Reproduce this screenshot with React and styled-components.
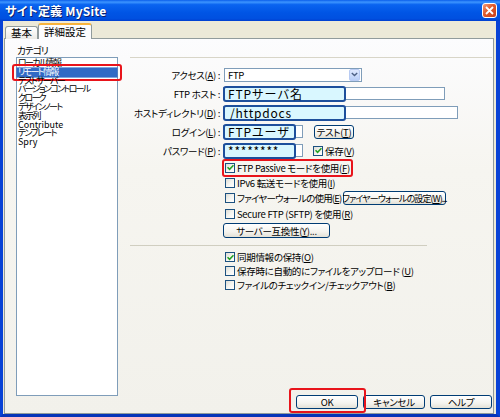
import React from 'react';
import styled, { createGlobalStyle } from 'styled-components';

const GlobalStyle = createGlobalStyle`
  html, body { margin: 0; padding: 0; background: #fff; }
  body {
    font-family: "Noto Sans CJK JP", "Liberation Sans", sans-serif;
    font-feature-settings: "palt" 1;
  }
`;

const Window = styled.div`
  width: 500px;
  height: 417px;
  display: flex;
  flex-direction: column;
  background: #ece9d8;
  overflow: hidden;
  font-size: 9.5px;
  letter-spacing: -0.3px;
  color: #000;
`;

const TitleBar = styled.div`
  height: 21px;
  flex: none;
  box-sizing: border-box;
  display: flex;
  align-items: center;
  justify-content: space-between;
  padding: 0 3px 0 5px;
  background: linear-gradient(to bottom, #0a5eeb 0%, #3d95ff 10%, #0a64f0 22%, #0055e5 60%, #0050e0 88%, #003ed0 100%);
`;

const Title = styled.span`
  color: #fff;
  font-weight: bold;
  font-size: 12px;
  letter-spacing: 0.2px;
  text-shadow: 1px 1px 0 #0a1e6a;
`;

const CloseBtn = styled.div`
  width: 15px;
  height: 15px;
  box-sizing: border-box;
  border: 1px solid #fff;
  border-radius: 3px;
  background: linear-gradient(135deg, #f09a7a 0%, #e05a2c 45%, #c7401a 100%);
  display: flex;
  align-items: center;
  justify-content: center;
`;

const Frame = styled.div`
  flex: 1;
  display: flex;
  flex-direction: column;
  border-left: 3px solid #0842d6;
  border-right: 4px solid #0842d6;
  border-bottom: 3px solid #0734b8;
  padding: 2px 2px 0 1px;
  min-height: 0;
`;

const TabRow = styled.div`
  height: 16px;
  display: flex;
  align-items: flex-end;
  padding-left: 1px;
  margin-bottom: -1px;
  position: relative;
  z-index: 1;
`;

const Tab = styled.div`
  box-sizing: border-box;
  height: ${p => (p.$active ? '16px' : '13px')};
  padding: 0 5px;
  border: 1px solid #919b9c;
  border-bottom: none;
  border-top: ${p => (p.$active ? '2px solid #f8b33c' : '1px solid #919b9c')};
  border-radius: 3px 3px 0 0;
  background: ${p => (p.$active ? '#fcfcfe' : 'linear-gradient(#ffffff, #ecebe6)')};
  font-size: 10.5px;
  letter-spacing: 0;
  line-height: ${p => (p.$active ? '13px' : '12px')};
`;

const Panel = styled.div`
  flex: 1;
  min-height: 0;
  display: flex;
  border: 1px solid #919b9c;
  background: linear-gradient(#fcfcfe 0%, #f6f5f0 35%, #f2f1eb 100%);
`;

const LeftCol = styled.div`
  width: 102px;
  margin-left: 11px;
  padding-top: 6px;
  display: flex;
  flex-direction: column;
`;

const CategoryLabel = styled.div`
  height: 12px;
  line-height: 11px;
  padding-left: 1px;
  letter-spacing: -0.8px;
`;

const ListBox = styled.div`
  box-sizing: border-box;
  height: 339px;
  border: 1px solid #7f9db9;
  background: #fff;
  padding-top: 1px;
`;

const ListItem = styled.div`
  position: relative;
  height: 8.8px;
  line-height: 8.8px;
  padding-left: 1px;
  font-size: 9px;
  letter-spacing: ${p => (p.$latin ? '0' : '-1.7px')};
  white-space: nowrap;
  color: ${p => (p.$selected ? '#fff' : '#000')};
  background: ${p => (p.$selected ? '#316ac5' : 'transparent')};
  box-shadow: ${p => (p.$selected ? '0 0 0 0.6px #316ac5' : 'none')};

  ${p => p.$callout && `
    &::after {
      content: '';
      position: absolute;
      left: -5px;
      right: -5px;
      top: -4px;
      bottom: -4px;
      border: 2px solid #e8141b;
      border-radius: 3px;
    }
  `}
`;

const RightCol = styled.div`
  flex: 1;
  margin: 18px 1px 0 12px;
  border-top: 1px solid #d8d5c8;
  padding-top: 7px;
  display: flex;
  flex-direction: column;
`;

const FormRow = styled.div`
  height: 19px;
  display: flex;
  align-items: center;
`;

const Label = styled.div`
  width: 90px;
  margin-right: 3px;
  text-align: right;
  white-space: nowrap;
`;

const Select = styled.div`
  box-sizing: border-box;
  width: 138px;
  height: 14px;
  margin-left: 1px;
  border: 1px solid #7f9db9;
  background: #fff;
  display: flex;
  align-items: center;
  justify-content: space-between;
  padding: 0 1px 0 3px;
`;

const SelectArrow = styled.div`
  box-sizing: border-box;
  width: 11px;
  height: 12px;
  border-radius: 2px;
  border: 1px solid #b8cbf3;
  background: linear-gradient(#dfe9ff, #b9cff8);
  display: flex;
  align-items: center;
  justify-content: center;
`;

const FieldWrap = styled.div`
  position: relative;
  width: ${p => p.$width}px;
  height: 16px;
  display: flex;
  align-items: center;
`;

const PlainBox = styled.div`
  box-sizing: border-box;
  width: 100%;
  height: 13px;
  border: 1px solid #7f9db9;
  background: #fff;
`;

const HighlightBox = styled.div`
  position: absolute;
  left: 0;
  top: 0;
  box-sizing: border-box;
  width: ${p => p.$width}px;
  height: 16px;
  border: 2px solid #1d4f9c;
  border-radius: 3px;
  background: #d9f7ff;
  padding-left: ${p => p.$pad || 3}px;
  font-size: 12px;
  line-height: 12px;
  letter-spacing: 0.8px;
  white-space: nowrap;
  font-feature-settings: normal;
`;

const Button = styled.div`
  box-sizing: border-box;
  width: ${p => p.$width}px;
  height: ${p => p.$height || 14}px;
  margin-left: ${p => p.$ml || 0}px;
  border: 1px solid #003c74;
  border-radius: 3px;
  background: linear-gradient(#ffffff 0%, #f4f3ee 60%, #e3e1d6 100%);
  display: flex;
  align-items: center;
  justify-content: center;
  white-space: nowrap;
  font-size: ${p => (p.$tight ? '9px' : 'inherit')};
  letter-spacing: ${p => (p.$tight ? '-0.9px' : 'inherit')};
`;

const CheckList = styled.div`
  margin-left: ${p => p.$ml}px;
  display: flex;
  flex-direction: column;
`;

const CheckRow = styled.div`
  height: ${p => p.$h}px;
  margin-left: ${p => p.$ml || 0}px;
  display: flex;
  align-items: center;
  white-space: nowrap;
`;

const CheckText = styled.span`
  width: ${p => (p.$width ? `${p.$width}px` : 'auto')};
  flex: none;
  letter-spacing: ${p => (p.$tight ? '-0.8px' : 'inherit')};
`;

const Box = styled.span`
  box-sizing: border-box;
  width: 10px;
  height: 10px;
  margin-right: 2px;
  flex: none;
  border: 1px solid #1c5180;
  background: linear-gradient(135deg, #dcdcd5 0%, #f4f4f0 50%, #ffffff 100%);
  display: inline-flex;
  align-items: center;
  justify-content: center;
`;

const Callout = styled.span`
  position: relative;
  display: inline-flex;
  align-items: center;

  &::after {
    content: '';
    position: absolute;
    inset: ${p => p.$inset};
    border: 2px solid #e8141b;
    border-radius: 3px;
  }
`;

const Separator = styled.div`
  width: 297px;
  height: 1px;
  margin-top: 7px;
  background: #d0cec0;
`;

const Footer = styled.div`
  margin-top: auto;
  padding-bottom: 4px;
  display: flex;
  justify-content: flex-end;
  gap: 5px;
`;

const Check = ({ checked }) => (
  <Box>
    {checked && (
      <svg width="7" height="7" viewBox="0 0 7 7">
        <path d="M0.5 3.2 L2.6 5.4 L6.5 1.2" stroke="#21a121" strokeWidth="1.6" fill="none" />
      </svg>
    )}
  </Box>
);

const Field = ({ width, hl, pad, children }) => (
  <FieldWrap $width={width}>
    <PlainBox />
    <HighlightBox $width={hl} $pad={pad}>{children}</HighlightBox>
  </FieldWrap>
);

const categories = [
  { name: 'ローカル情報' },
  { name: 'リモート情報', selected: true },
  { name: 'テストサーバー' },
  { name: 'バージョンコントロール' },
  { name: 'クローク' },
  { name: 'デザインノート' },
  { name: '表示列' },
  { name: 'Contribute', latin: true },
  { name: 'テンプレート' },
  { name: 'Spry', latin: true },
];

export default function App() {
  return (
    <>
      <GlobalStyle />
      <Window>
        <TitleBar>
          <Title>サイト定義 MySite</Title>
          <CloseBtn>
            <svg width="9" height="9" viewBox="0 0 9 9">
              <path d="M1 1 L8 8 M8 1 L1 8" stroke="#fff" strokeWidth="1.8" />
            </svg>
          </CloseBtn>
        </TitleBar>
        <Frame>
          <TabRow>
            <Tab>基本</Tab>
            <Tab $active>詳細設定</Tab>
          </TabRow>
          <Panel>
            <LeftCol>
              <CategoryLabel>カテゴリ</CategoryLabel>
              <ListBox>
                {categories.map(c => (
                  <ListItem key={c.name} $selected={c.selected} $callout={c.selected} $latin={c.latin}>{c.name}</ListItem>
                ))}
              </ListBox>
            </LeftCol>
            <RightCol>
              <FormRow>
                <Label>アクセス(<u>A</u>) :</Label>
                <Select>
                  FTP
                  <SelectArrow>
                    <svg width="7" height="5" viewBox="0 0 7 5">
                      <path d="M0.8 1 L3.5 3.6 L6.2 1" stroke="#4d6185" strokeWidth="1.4" fill="none" />
                    </svg>
                  </SelectArrow>
                </Select>
              </FormRow>
              <FormRow>
                <Label>FTP ホスト :</Label>
                <Field width={222} hl={123}>FTPサーバ名</Field>
              </FormRow>
              <FormRow>
                <Label>ホストディレクトリ(<u>D</u>) :</Label>
                <Field width={235} hl={123} pad={5}>/httpdocs</Field>
              </FormRow>
              <FormRow>
                <Label>ログイン(<u>L</u>) :</Label>
                <Field width={80} hl={73}>FTPユーザ</Field>
                <Button $width={40} $ml={11}>テスト(<u>T</u>)</Button>
              </FormRow>
              <FormRow>
                <Label>パスワード(<u>P</u>) :</Label>
                <Field width={80} hl={73}>********</Field>
                <CheckRow $h={19} $ml={10}>
                  <Check checked />保存(<u>V</u>)
                </CheckRow>
              </FormRow>
              <CheckList $ml={95}>
                <CheckRow $h={15}>
                  <Callout $inset="-2px -3px -2px -3px">
                    <Check checked />FTP Passive モードを使用(<u>F</u>)
                  </Callout>
                </CheckRow>
                <CheckRow $h={15}>
                  <Check />IPv6 転送モードを使用(<u>I</u>)
                </CheckRow>
                <CheckRow $h={16}>
                  <Check />
                  <CheckText $width={104} $tight>ファイヤーウォールの使用(<u>E</u>)</CheckText>
                  <Button $width={103} $ml={2} $tight>ファイヤーウォールの設定(<u>W</u>)...</Button>
                </CheckRow>
                <CheckRow $h={15}>
                  <Check />Secure FTP (SFTP) を使用(<u>R</u>)
                </CheckRow>
                <Button $width={107} $height={15} $ml={-2} style={{ marginTop: 2 }}>サーバー互換性(<u>Y</u>)...</Button>
              </CheckList>
              <Separator />
              <CheckList $ml={95} style={{ marginTop: 4 }}>
                <CheckRow $h={14}>
                  <Check checked />同期情報の保持(<u>O</u>)
                </CheckRow>
                <CheckRow $h={14}>
                  <Check />保存時に自動的にファイルをアップロード (<u>U</u>)
                </CheckRow>
                <CheckRow $h={14}>
                  <Check />ファイルのチェックイン/チェックアウト(<u>B</u>)
                </CheckRow>
              </CheckList>
              <Footer>
                <Callout $inset="-7px -8px -4px -7px">
                  <Button $width={62}>OK</Button>
                </Callout>
                <Button $width={62}>キャンセル</Button>
                <Button $width={62}>ヘルプ</Button>
              </Footer>
            </RightCol>
          </Panel>
        </Frame>
      </Window>
    </>
  );
}
